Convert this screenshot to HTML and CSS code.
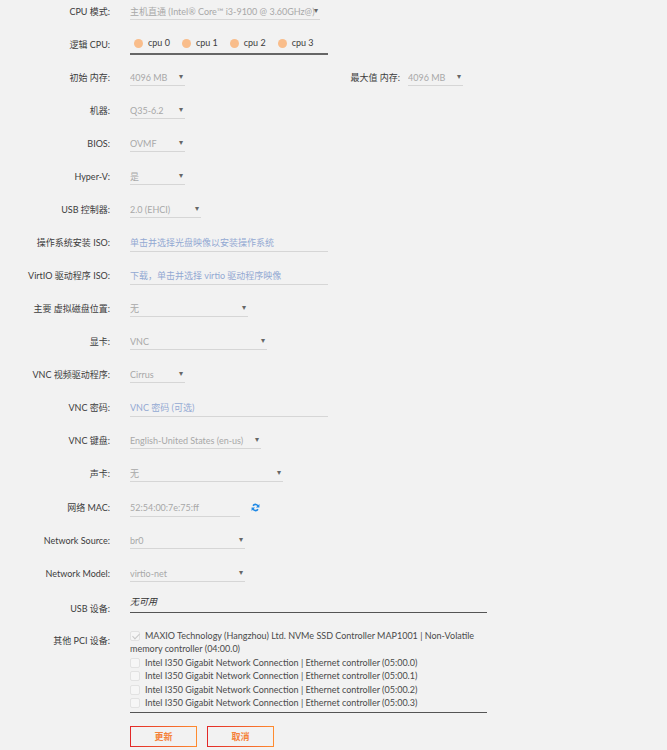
FILE: index.html
```html
<!DOCTYPE html>
<html lang="zh-CN">
<head>
    <meta charset="UTF-8" />
    <meta name="viewport" content="width=device-width, initial-scale=1.0" />
    <title>编辑虚拟机</title>
    <link rel="stylesheet" href="styles.css">
</head>
<body>

<form class="vm-form" id="vmForm">
    <div class="section">
        <div class="row">
            <label class="lbl">CPU 模式:</label>
            <div class="field">
                <span class="sel w190 sel-wide">
                    <select><option>主机直通 (Intel® Core™ i3-9100 @ 3.60GHz@)</option></select>
                </span>
            </div>
        </div>

        <div class="row row-cpu">
            <label class="lbl">逻辑 CPU:</label>
            <div class="field cpu-list">
                <span class="cpu"><i class="dot"></i>cpu 0</span>
                <span class="cpu"><i class="dot"></i>cpu 1</span>
                <span class="cpu"><i class="dot"></i>cpu 2</span>
                <span class="cpu"><i class="dot"></i>cpu 3</span>
            </div>
        </div>

        <div class="row">
            <label class="lbl">初始 内存:</label>
            <div class="field">
                <span class="sel w55"><select><option>4096 MB</option></select></span>
                <label class="lbl sub-lbl">最大值 内存:</label>
                <span class="sel w55"><select><option>4096 MB</option></select></span>
            </div>
        </div>

        <div class="row">
            <label class="lbl">机器:</label>
            <div class="field"><span class="sel w55"><select><option>Q35-6.2</option></select></span></div>
        </div>

        <div class="row">
            <label class="lbl">BIOS:</label>
            <div class="field"><span class="sel w55"><select><option>OVMF</option></select></span></div>
        </div>

        <div class="row">
            <label class="lbl">Hyper-V:</label>
            <div class="field"><span class="sel w55"><select><option>是</option></select></span></div>
        </div>

        <div class="row">
            <label class="lbl">USB 控制器:</label>
            <div class="field"><span class="sel w71"><select><option>2.0 (EHCI)</option></select></span></div>
        </div>

        <div class="row">
            <label class="lbl">操作系统安装 ISO:</label>
            <div class="field"><input class="txt w198" type="text" placeholder="单击并选择光盘映像以安装操作系统" /></div>
        </div>

        <div class="row">
            <label class="lbl">VirtIO 驱动程序 ISO:</label>
            <div class="field"><input class="txt w198" type="text" placeholder="下载，单击并选择 virtio 驱动程序映像" /></div>
        </div>

        <div class="row">
            <label class="lbl">主要 虚拟磁盘位置:</label>
            <div class="field"><span class="sel w118"><select><option>无</option></select></span></div>
        </div>

        <div class="row">
            <label class="lbl">显卡:</label>
            <div class="field"><span class="sel w137"><select><option>VNC</option></select></span></div>
        </div>

        <div class="row">
            <label class="lbl">VNC 视频驱动程序:</label>
            <div class="field"><span class="sel w55"><select><option>Cirrus</option></select></span></div>
        </div>

        <div class="row">
            <label class="lbl">VNC 密码:</label>
            <div class="field"><input class="txt w198" type="password" placeholder="VNC 密码 (可选)" /></div>
        </div>

        <div class="row">
            <label class="lbl">VNC 键盘:</label>
            <div class="field"><span class="sel w131"><select><option>English-United States (en-us)</option></select></span></div>
        </div>

        <div class="row">
            <label class="lbl">声卡:</label>
            <div class="field"><span class="sel w153"><select><option>无</option></select></span></div>
        </div>
    </div>

    <!-- network -->
    <div class="section">
        <div class="row">
            <label class="lbl">网络 MAC:</label>
            <div class="field">
                <input class="txt w110" type="text" value="52:54:00:7e:75:ff" />
                <svg class="refresh" viewBox="0 0 16 16" width="9" height="9">
                    <g fill="none" stroke="#1e88e5" stroke-width="2.8">
                        <path d="M13 6.4A5.2 5.2 0 0 0 3.6 4.8" />
                        <path d="M3 9.6A5.2 5.2 0 0 0 12.4 11.2" />
                    </g>
                    <path fill="#1e88e5" d="M15 1.6v6.2h-6.2z" />
                    <path fill="#1e88e5" d="M1 14.4V8.2h6.2z" />
                </svg>
            </div>
        </div>

        <div class="row">
            <label class="lbl">Network Source:</label>
            <div class="field"><span class="sel w115"><select><option>br0</option></select></span></div>
        </div>

        <div class="row">
            <label class="lbl">Network Model:</label>
            <div class="field"><span class="sel w115"><select><option>virtio-net</option></select></span></div>
        </div>
    </div>

    <!-- passthrough devices -->
    <div class="row row-usb">
        <label class="lbl">USB 设备:</label>
        <div class="field list-box">
            <i class="none">无可用</i>
        </div>
    </div>

    <div class="row row-pci">
        <label class="lbl">其他 PCI 设备:</label>
        <div class="field list-box pci-list">
            <label class="pci"><input type="checkbox" checked disabled />MAXIO Technology (Hangzhou) Ltd. NVMe SSD Controller MAP1001 | Non-Volatile memory controller (04:00.0)</label>
            <label class="pci"><input type="checkbox" />Intel I350 Gigabit Network Connection | Ethernet controller (05:00.0)</label>
            <label class="pci"><input type="checkbox" />Intel I350 Gigabit Network Connection | Ethernet controller (05:00.1)</label>
            <label class="pci"><input type="checkbox" />Intel I350 Gigabit Network Connection | Ethernet controller (05:00.2)</label>
            <label class="pci"><input type="checkbox" />Intel I350 Gigabit Network Connection | Ethernet controller (05:00.3)</label>
        </div>
    </div>

    <div class="actions">
        <button type="submit">更新</button>
        <button type="button">取消</button>
    </div>
</form>

</body>
</html>
```

FILE: styles.css
```css
body {
    font-family: Lato, "Noto Sans CJK SC", sans-serif;
    font-size: 9px;
    background-color: #f2f2f2;
    color: #3c3c3c;
    margin: 0;
}

.vm-form {
    padding-top: 3px;
}

.section + .section {
    margin-top: 1px;
}

.row {
    display: flex;
    align-items: flex-start;
    height: 33px;
}

.lbl {
    width: 110px;
    margin-right: 20px;
    flex-shrink: 0;
    text-align: right;
    line-height: 17px;
    color: #3c3c3c;
}

.field {
    display: flex;
    align-items: flex-start;
}

/* selects: flat, underlined, small arrow on the right */
.sel {
    position: relative;
    display: inline-block;
}

.sel select {
    -webkit-appearance: none;
    appearance: none;
    display: block;
    width: 100%;
    height: 17px;
    padding: 0 8px 0 0;
    margin: 0;
    border: none;
    border-bottom: 1px solid #d6d6d6;
    border-radius: 0;
    background: transparent;
    font-family: inherit;
    font-size: 9px;
    color: #a8a8a8;
    outline: none;
}

.sel-wide select {
    padding-right: 4px;
}

.sel::after {
    content: "▾";
    position: absolute;
    right: 2px;
    top: 2px;
    font-size: 8px;
    color: #666;
    pointer-events: none;
}

.txt {
    display: block;
    height: 17px;
    padding: 0;
    margin: 0;
    border: none;
    border-bottom: 1px solid #d6d6d6;
    background: transparent;
    font-family: inherit;
    font-size: 9px;
    color: #a8a8a8;
    outline: none;
    box-sizing: content-box;
}

.txt::placeholder {
    color: #93a9d3;
}

.w55 { width: 55px; }
.w71 { width: 71px; }
.w110 { width: 110px; }
.w115 { width: 115px; }
.w118 { width: 118px; }
.w131 { width: 131px; }
.w137 { width: 137px; }
.w153 { width: 153px; }
.w190 { width: 190px; }
.w198 { width: 198px; }

.sub-lbl {
    margin-left: 105px;
    margin-right: 8px;
}

.refresh {
    margin: 4px 0 0 11px;
}

/* logical cpu pins */
.cpu-list {
    width: 198px;
    padding: 0 0 3px 4px;
    border-bottom: 2px solid #666;
    box-sizing: border-box;
    line-height: 14px;
    white-space: nowrap;
}

.cpu {
    display: inline-flex;
    align-items: center;
    flex-shrink: 0;
    margin-right: 12px;
    color: #3c3c3c;
}

.cpu .dot {
    width: 9px;
    height: 9px;
    border-radius: 50%;
    background-color: #f9bd8b;
    margin-right: 5px;
}

.list-box {
    width: 357px;
    border-bottom: 1px solid #555;
    flex-direction: column;
}

.row-usb {
    height: 34px;
}

.row-usb .lbl {
    padding-top: 2px;
}

.row-usb .list-box {
    margin-top: -2px;
    padding-bottom: 4px;
}

.none {
    font-style: italic;
    color: #333;
    line-height: 12px;
}

.row-pci {
    height: auto;
}

.pci-list {
    margin-top: -3px;
    padding-bottom: 3px;
    display: block;
}

.pci {
    display: block;
    line-height: 13.4px;
    color: #4a4a4a;
}

.pci input {
    -webkit-appearance: none;
    appearance: none;
    width: 10px;
    height: 10px;
    margin: 0 5px 0 0;
    vertical-align: -2px;
    border: 1px solid #e2e2e2;
    border-radius: 2px;
    background: #f6f6f6;
    box-sizing: border-box;
    position: relative;
}

.pci input:checked::after {
    content: "";
    position: absolute;
    left: 3px;
    top: 0;
    width: 3px;
    height: 6px;
    border: solid #c8c8c8;
    border-width: 0 1.5px 1.5px 0;
    transform: rotate(45deg);
}

.actions {
    display: flex;
    gap: 10px;
    padding: 13px 0 0 130px;
}

.actions button {
    width: 67px;
    height: 21px;
    padding: 0;
    border: 1px solid;
    border-image: linear-gradient(90deg, #e22828 0, #ff8c2f) 1;
    background: transparent;
    font-family: inherit;
    font-size: 9px;
    font-weight: bold;
    color: #f5823a;
    cursor: pointer;
}

.actions button:hover {
    background-color: #fff3ea;
}
```
